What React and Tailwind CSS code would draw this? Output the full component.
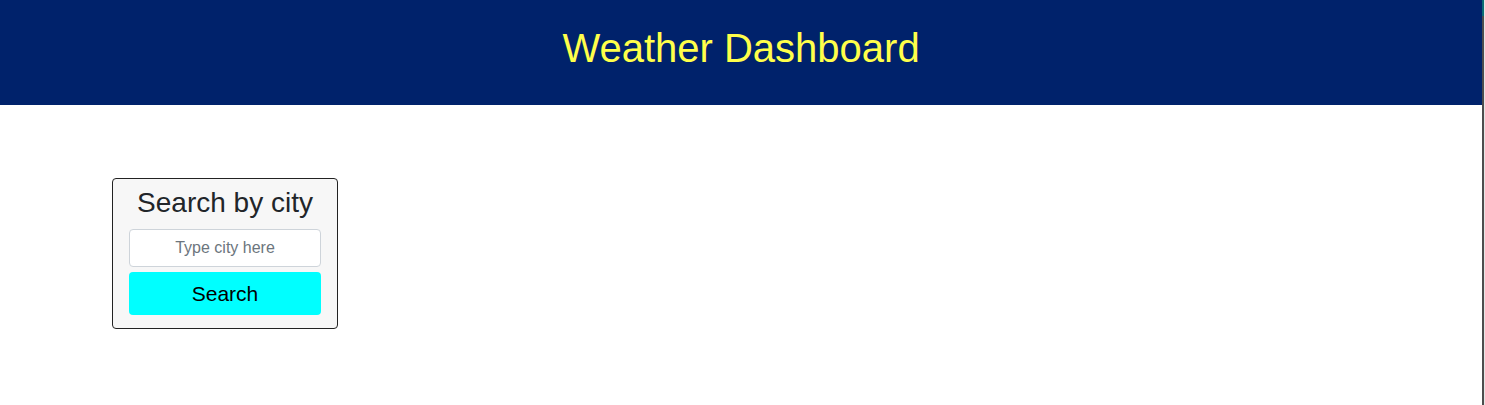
import React, { useState } from 'react';

function SearchCard() {
    const [city, setCity] = useState('');

    return (
        <div className="w-[226px] h-[151px] border border-[#222] rounded-[4px] bg-[#f7f7f7] px-[16px] pt-[7px] flex flex-col">
            <h2 className="text-[28px] leading-[34px] text-center text-[#212529] mb-[9px]">Search by city</h2>
            <input
                value={city}
                onChange={e => setCity(e.target.value)}
                placeholder="Type city here"
                className="h-[38px] w-full bg-white border border-[#ced4da] rounded-[4px] text-center text-[16px] placeholder:text-[#6c757d] outline-none"
            />
            <button className="mt-[5px] h-[43px] w-full bg-[#00ffff] rounded-[4px] text-[21px] text-black">
                Search
            </button>
        </div>
    );
}

export default function App() {
    return (
        <div className="w-[1485px] h-[405px] flex bg-white font-['Liberation_Sans',Arial,sans-serif]">
            <div className="w-[1482px] flex flex-col">
                <header className="h-[105px] bg-[#00226b] flex items-center justify-center">
                    <h1 className="text-[40px] text-[#ffff4a] leading-none pb-[10px]">Weather Dashboard</h1>
                </header>
                <main className="pl-[112px] pt-[73px]">
                    <SearchCard />
                </main>
            </div>
            <div className="w-[2px] flex flex-col bg-[#4d4d4d]">
                <div className="h-[16px] bg-[#0b6b74]"></div>
            </div>
            <div className="w-[1px] bg-[#e5e5e5]"></div>
        </div>
    );
}
